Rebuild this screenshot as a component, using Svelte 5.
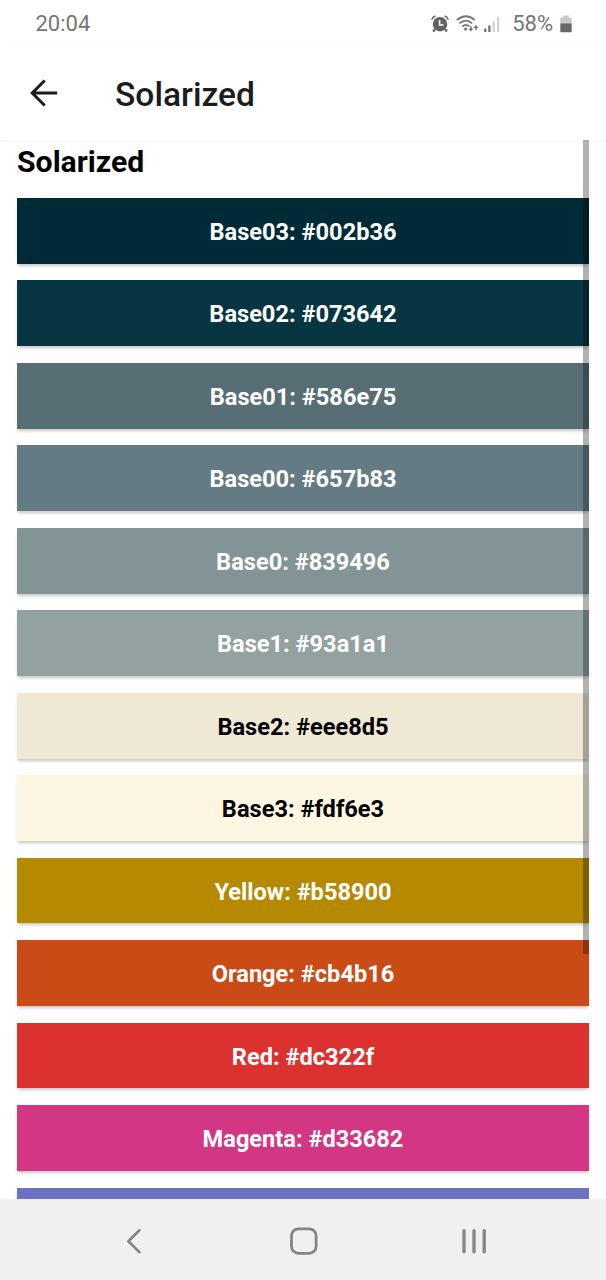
<script>
  const swatches = [
    { name: 'Base03', color: '#002b36', text: '#fff' },
    { name: 'Base02', color: '#073642', text: '#fff' },
    { name: 'Base01', color: '#586e75', text: '#fff' },
    { name: 'Base00', color: '#657b83', text: '#fff' },
    { name: 'Base0', color: '#839496', text: '#fff' },
    { name: 'Base1', color: '#93a1a1', text: '#fff' },
    { name: 'Base2', color: '#eee8d5', text: '#000' },
    { name: 'Base3', color: '#fdf6e3', text: '#000' },
    { name: 'Yellow', color: '#b58900', text: '#fff' },
    { name: 'Orange', color: '#cb4b16', text: '#fff' },
    { name: 'Red', color: '#dc322f', text: '#fff' },
    { name: 'Magenta', color: '#d33682', text: '#fff' }
  ];
</script>

<div class="screen">
  <div class="status">
    <span class="time">20:04</span>
    <div class="indicators">
      <svg class="alarm" width="20" height="20" viewBox="0 0 20 20">
        <circle cx="10" cy="10.2" r="7.2" fill="#616161" />
        <path d="M4.9 15 3.2 17.6M15.1 15 16.8 17.6" stroke="#616161" stroke-width="2.2" />
        <path d="M1.8 5.6Q2.6 2.8 5.5 2M18.2 5.6Q17.4 2.8 14.5 2" fill="none" stroke="#616161" stroke-width="1.6" />
        <path d="M9.6 6V11H13.6" fill="none" stroke="#fff" stroke-width="1.6" />
      </svg>
      <svg class="wifi" width="23" height="20" viewBox="0 0 23 20">
        <g fill="none" stroke="#777" stroke-width="1.8">
          <path d="M.8 6Q9.8-1.6 18.8 6" />
          <path d="M3.4 9.4Q9.8 3.9 16.2 9.4" />
          <path d="M6.2 12.6Q9.8 9.5 13.4 12.4" />
        </g>
        <circle cx="9.6" cy="15" r="1.6" fill="#777" />
        <path d="M14.9 12.2v3M19.9 16v-3" stroke="#777" stroke-width="1.5" />
        <path d="M12.4 14.4h5l-2.5 3.2zM17.4 14h5l-2.5-3.2z" fill="#777" />
      </svg>
      <svg class="signal" width="17" height="18" viewBox="0 0 17 18">
        <path d="M1.3 13.6v3.4M5.4 10.4V17" stroke="#666" stroke-width="2.1" />
        <path d="M9.7 6.2V17M14.1 1.8V17" stroke="#d0d0d0" stroke-width="2.1" />
      </svg>
      <span class="percent">58%</span>
      <svg class="battery" width="12" height="18" viewBox="0 0 12 18">
        <path d="M3.3 0.5h5.4v2H11q.7 0 .7.7V9H.3V3.2q0-.7.7-.7h2.3z" fill="#c9c9c9" />
        <path d="M.3 8.5h11.4v7.8q0 .9-.9.9H1.2q-.9 0-.9-.9z" fill="#686868" />
      </svg>
    </div>
  </div>

  <header>
    <svg class="back" width="30" height="30" viewBox="0 0 30 30">
      <path d="M28.2 15H3.2M15.7 2.5 3.2 15 15.7 27.5" fill="none" stroke="#1c1c1e" stroke-width="3" />
    </svg>
    <h1>Solarized</h1>
  </header>

  <main>
    <h2>Solarized</h2>
    <div class="list">
      {#each swatches as swatch}
        <div class="swatch" style="background: {swatch.color}; color: {swatch.text}">
          {swatch.name}: {swatch.color}
        </div>
      {/each}
      <div class="swatch violet"></div>
    </div>
    <div class="scrollbar"></div>
  </main>

  <nav>
    <svg width="30" height="30" viewBox="0 0 30 30">
      <path d="M20.4 4.3 9.4 15.2l11 10.9" fill="none" stroke="#858585" stroke-width="2.7" stroke-linecap="round" stroke-linejoin="round" />
    </svg>
    <svg width="30" height="30" viewBox="0 0 30 30">
      <rect x="2.5" y="2.8" width="24.6" height="24.6" rx="7" fill="none" stroke="#858585" stroke-width="2.8" />
    </svg>
    <svg width="30" height="30" viewBox="0 0 30 30">
      <path d="M5 4.7v21.1M15 4.7v21.1M25.2 4.7v21.1" stroke="#858585" stroke-width="3.3" stroke-linecap="round" />
    </svg>
  </nav>
</div>

<style>
  .screen {
    width: 606px;
    height: 1280px;
    display: flex;
    flex-direction: column;
    overflow: hidden;
    background: #fff;
    font-family: Roboto, sans-serif;
  }

  .status {
    height: 48px;
    flex: none;
    box-sizing: border-box;
    padding: 0 34px 0 35.5px;
    display: flex;
    align-items: center;
    justify-content: space-between;
    color: #757575;
    font-size: 22px;
    line-height: 48px;
  }

  .indicators {
    display: flex;
    align-items: center;
  }

  .wifi {
    margin-left: 6px;
  }

  .signal {
    margin-left: 5px;
  }

  .percent {
    margin-left: 11px;
  }

  .battery {
    margin-left: 7px;
    margin-top: -1px;
  }

  header {
    height: 92px;
    flex: none;
    display: flex;
    align-items: center;
    padding-left: 29px;
    box-shadow: 0 1px 3px rgba(0, 0, 0, 0.05);
  }

  .back {
    margin-top: -3px;
  }

  h1 {
    margin: 2px 0 0 56px;
    font-size: 33.6px;
    font-weight: 500;
    line-height: 40px;
    color: #1c1c1e;
  }

  main {
    position: relative;
    flex: 1;
    min-height: 0;
    overflow: hidden;
    padding: 0 17px;
  }

  h2 {
    margin: 0;
    height: 57.8px;
    font-size: 30.2px;
    font-weight: 700;
    line-height: 44px;
    color: #000;
  }

  .list {
    display: flex;
    flex-direction: column;
    gap: 16.7px;
  }

  .swatch {
    height: 65.8px;
    flex: none;
    text-align: center;
    font-size: 23.6px;
    font-weight: 700;
    line-height: 69px;
    box-shadow: 0 3px 3px -1px rgba(0, 0, 0, 0.22);
  }

  .violet {
    background: #6c71c4;
  }

  .scrollbar {
    position: absolute;
    top: 0;
    right: 17px;
    width: 6px;
    height: 814px;
    background: rgba(0, 0, 0, 0.3);
  }

  nav {
    height: 81px;
    flex: none;
    box-sizing: border-box;
    padding: 2px 117px 0 119px;
    display: flex;
    align-items: center;
    justify-content: space-between;
    background: #f0f0f0;
  }
</style>
